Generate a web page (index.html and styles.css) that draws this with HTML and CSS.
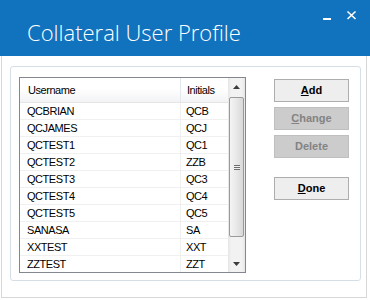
FILE: index.html
```html
<!DOCTYPE html>
<html>
<head>
<meta charset="utf-8">
<link rel="stylesheet" href="styles.css">
</head>
<body>
<div class="window">
  <div class="titlebar">
    <div class="title">Collateral User Profile</div>
    <svg class="winctl" width="34" height="12" viewBox="0 0 34 12">
      <rect x="0" y="8" width="8" height="2" fill="#fff"/>
      <path d="M24.5 1.5 L32.5 9 M32.5 1.5 L24.5 9" stroke="#fff" stroke-width="1.6" fill="none"/>
    </svg>
  </div>
  <div class="client">
    <div class="group">
      <div class="listview">
        <div class="lv-body">
          <div class="lv-head">
            <div class="hcell c1">Username</div>
            <div class="hcell c2">Initials</div>
          </div>
          <div class="lv-row"><div class="cell c1">QCBRIAN</div><div class="cell c2">QCB</div></div>
          <div class="lv-row"><div class="cell c1">QCJAMES</div><div class="cell c2">QCJ</div></div>
          <div class="lv-row"><div class="cell c1">QCTEST1</div><div class="cell c2">QC1</div></div>
          <div class="lv-row"><div class="cell c1">QCTEST2</div><div class="cell c2">ZZB</div></div>
          <div class="lv-row"><div class="cell c1">QCTEST3</div><div class="cell c2">QC3</div></div>
          <div class="lv-row"><div class="cell c1">QCTEST4</div><div class="cell c2">QC4</div></div>
          <div class="lv-row"><div class="cell c1">QCTEST5</div><div class="cell c2">QC5</div></div>
          <div class="lv-row"><div class="cell c1">SANASA</div><div class="cell c2">SA</div></div>
          <div class="lv-row"><div class="cell c1">XXTEST</div><div class="cell c2">XXT</div></div>
          <div class="lv-row"><div class="cell c1">ZZTEST</div><div class="cell c2">ZZT</div></div>
        </div>
        <div class="scrollbar">
          <div class="sb-btn">
            <svg width="7" height="4" viewBox="0 0 7 4"><path d="M3.5 0 L7 4 L0 4 Z" fill="#3c3c3c"/></svg>
          </div>
          <div class="sb-track">
            <div class="sb-thumb">
              <div class="grip"></div>
            </div>
          </div>
          <div class="sb-btn">
            <svg width="7" height="4" viewBox="0 0 7 4"><path d="M0 0 L7 0 L3.5 4 Z" fill="#3c3c3c"/></svg>
          </div>
        </div>
      </div>
      <div class="buttons">
        <div class="btn"><u>A</u>dd</div>
        <div class="btn disabled"><u>C</u>hange</div>
        <div class="btn disabled">Delete</div>
        <div class="btn done"><u>D</u>one</div>
      </div>
    </div>
  </div>
</div>
</body>
</html>
```
FILE: styles.css
```css
html, body {
  margin: 0;
  padding: 0;
  background: #ffffff;
}
.window {
  width: 370px;
  height: 300px;
  display: flex;
  flex-direction: column;
}
.titlebar {
  height: 56px;
  background: #1172bd;
  display: flex;
  align-items: flex-start;
  padding-right: 13px;
  box-sizing: border-box;
}
.title {
  font-family: "Open Sans", "Liberation Sans", sans-serif;
  font-weight: 300;
  font-size: 22px;
  line-height: 24px;
  color: #ffffff;
  padding-top: 20px;
  padding-left: 27px;
}
.winctl {
  margin-left: auto;
  margin-top: 10px;
}
.client {
  margin-left: 1px;
  width: 366px;
  height: 242px;
  box-sizing: border-box;
  border: 1px solid #d6d6d6;
  border-top: none;
  padding-left: 8px;
  padding-top: 10px;
}
.group {
  width: 351px;
  height: 215px;
  box-sizing: border-box;
  border: 1px solid #d5dfe5;
  border-radius: 3px;
  padding: 10px 0 0 8px;
  display: flex;
  align-items: flex-start;
}
.listview {
  width: 227px;
  height: 196px;
  box-sizing: border-box;
  border: 1px solid #828790;
  display: flex;
  background: #fff;
}
.lv-body {
  flex: 1;
  overflow: hidden;
  font-family: "Liberation Sans", Arial, sans-serif;
  font-size: 11px;
  letter-spacing: -0.45px;
  color: #000;
}
.lv-head {
  display: flex;
  height: 25px;
  box-sizing: border-box;
  border-bottom: 1px solid #e5e5e5;
  background: linear-gradient(#ffffff 0%, #ffffff 45%, #f2f3f5 100%);
}
.hcell {
  line-height: 24px;
  box-sizing: border-box;
}
.hcell.c1 {
  width: 161px;
  padding-left: 8px;
  border-right: 1px solid #e3e8ee;
}
.hcell.c2 {
  width: 46px;
  padding-left: 6px;
}
.lv-row {
  display: flex;
  height: 17px;
  box-sizing: border-box;
  border-bottom: 1px solid #f0f0f0;
}
.cell {
  line-height: 16px;
  box-sizing: border-box;
  white-space: nowrap;
}
.cell.c1 {
  width: 161px;
  padding-left: 7px;
  border-right: 1px solid #f0f0f0;
}
.cell.c2 {
  width: 46px;
  padding-left: 5px;
}
.scrollbar {
  width: 17px;
  display: flex;
  flex-direction: column;
  background: linear-gradient(90deg, #e6e6e6 0%, #f2f2f2 20%, #f2f2f2 80%, #e6e6e6 100%);
}
.sb-btn {
  height: 17px;
  display: flex;
  align-items: center;
  justify-content: center;
}
.sb-track {
  flex: 1;
  padding: 2px 1px 0 1px;
}
.sb-thumb {
  height: 140px;
  box-sizing: border-box;
  border: 1px solid #9a9a9a;
  border-radius: 2px;
  background: linear-gradient(90deg, #f4f4f4 0%, #e8e8e8 50%, #d8d8d8 100%);
  display: flex;
  align-items: center;
  justify-content: center;
}
.grip {
  width: 6px;
  height: 5px;
  background: repeating-linear-gradient(#6e6e6e 0px, #6e6e6e 1px, #f0f0f0 1px, #f0f0f0 2px);
}
.buttons {
  margin-left: 28px;
  margin-top: 2px;
  display: flex;
  flex-direction: column;
  gap: 5px;
}
.btn {
  width: 75px;
  height: 23px;
  box-sizing: border-box;
  border: 1px solid #adadad;
  background: #eeeeee;
  font-family: "Liberation Sans", Arial, sans-serif;
  font-weight: bold;
  font-size: 11px;
  line-height: 21px;
  text-align: center;
  color: #000;
}
.btn.disabled {
  background: #cccccc;
  border-color: #bfbfbf;
  color: #838383;
}
.btn.done {
  margin-top: 14px;
}
```
